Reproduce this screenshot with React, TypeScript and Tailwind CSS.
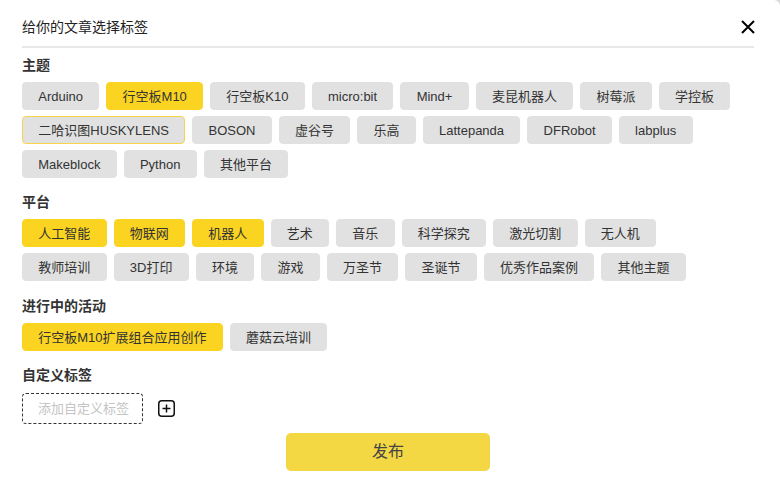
// 标签数据
const topics = [
  { name: "Arduino" },
  { name: "行空板M10", active: true },
  { name: "行空板K10" },
  { name: "micro:bit" },
  { name: "Mind+" },
  { name: "麦昆机器人" },
  { name: "树莓派" },
  { name: "学控板" },
  { name: "二哈识图HUSKYLENS", outlined: true },
  { name: "BOSON" },
  { name: "虚谷号" },
  { name: "乐高" },
  { name: "Lattepanda" },
  { name: "DFRobot" },
  { name: "labplus" },
  { name: "Makeblock" },
  { name: "Python" },
  { name: "其他平台" },
]

const platforms = [
  { name: "人工智能", active: true },
  { name: "物联网", active: true },
  { name: "机器人", active: true },
  { name: "艺术" },
  { name: "音乐" },
  { name: "科学探究" },
  { name: "激光切割" },
  { name: "无人机" },
  { name: "教师培训" },
  { name: "3D打印" },
  { name: "环境" },
  { name: "游戏" },
  { name: "万圣节" },
  { name: "圣诞节" },
  { name: "优秀作品案例" },
  { name: "其他主题" },
]

const events = [
  { name: "行空板M10扩展组合应用创作", active: true },
  { name: "蘑菇云培训" },
]

type TagItem = { name: string; active?: boolean; outlined?: boolean }

function Tag({ tag }: { tag: TagItem }) {
  let cls = "bg-[#e1e1e1] border-[#e1e1e1]"
  if (tag.active) cls = "bg-[#fad420] border-[#fad420]"
  if (tag.outlined) cls = "bg-[#e1e1e1] border-[#f6d548]"
  return (
    <span
      className={`h-[28px] px-[15.25px] flex items-center rounded-[4px] border text-[13px] leading-none text-[#333] whitespace-nowrap ${cls}`}
    >
      {tag.name}
    </span>
  )
}

function Section({ title, tags, className = "" }: { title: string; tags: TagItem[]; className?: string }) {
  return (
    <div className={className}>
      <h3 className="text-[14px] leading-[20px] font-bold text-[#333]">{title}</h3>
      <div className="mt-[7px] w-[716px] flex flex-wrap gap-[6px_7px]">
        {tags.map((t) => (
          <Tag key={t.name} tag={t} />
        ))}
      </div>
    </div>
  )
}

export default function App() {
  return (
    <div
      className="w-[780px] h-[481px] bg-[#d9d9d9] overflow-hidden"
      style={{ fontFamily: '"Liberation Sans", "Noto Sans CJK SC", sans-serif' }}
    >
      <div className="w-full h-full bg-white rounded-tr-[6px] pl-[22px] pr-[26px]">
        {/* 标题栏 */}
        <div className="h-[48px] pt-[17px] flex items-start justify-between border-b-2 border-[#e8e8e8]">
          <span className="text-[14px] leading-[20px] text-[#222]">给你的文章选择标签</span>
          <svg width="14" height="14" viewBox="0 0 14 14" className="mt-[3px] -mr-[1px]">
            <path d="M1 1l12 12M13 1L1 13" stroke="#000" strokeWidth="2" />
          </svg>
        </div>

        <Section title="主题" tags={topics} className="mt-[7px]" />
        <Section title="平台" tags={platforms} className="mt-[14px]" />
        <Section title="进行中的活动" tags={events} className="mt-[15px]" />

        {/* 自定义标签 */}
        <div className="mt-[14px]">
          <h3 className="text-[14px] leading-[20px] font-bold text-[#333]">自定义标签</h3>
          <div className="mt-[8px] flex items-center gap-[15px]">
            <div className="w-[121px] h-[31px] border border-dashed border-[#333] rounded-[4px] flex items-center pl-[15px] text-[13px] leading-none whitespace-nowrap text-[#c4c4c4]">
              添加自定义标签
            </div>
            <svg width="17" height="17" viewBox="0 0 17 17" className="-mt-[1px]">
              <rect x="0.75" y="0.75" width="15.5" height="15.5" rx="3" fill="none" stroke="#111" strokeWidth="1.5" />
              <path d="M8.5 4.5v8M4.5 8.5h8" stroke="#111" strokeWidth="1.5" />
            </svg>
          </div>
        </div>

        {/* 发布按钮 */}
        <div className="mt-[9px] flex justify-center">
          <button className="w-[204px] h-[38px] rounded-[5px] bg-[#f3d843] text-[16px] text-[#444]">发布</button>
        </div>
      </div>
    </div>
  )
}
